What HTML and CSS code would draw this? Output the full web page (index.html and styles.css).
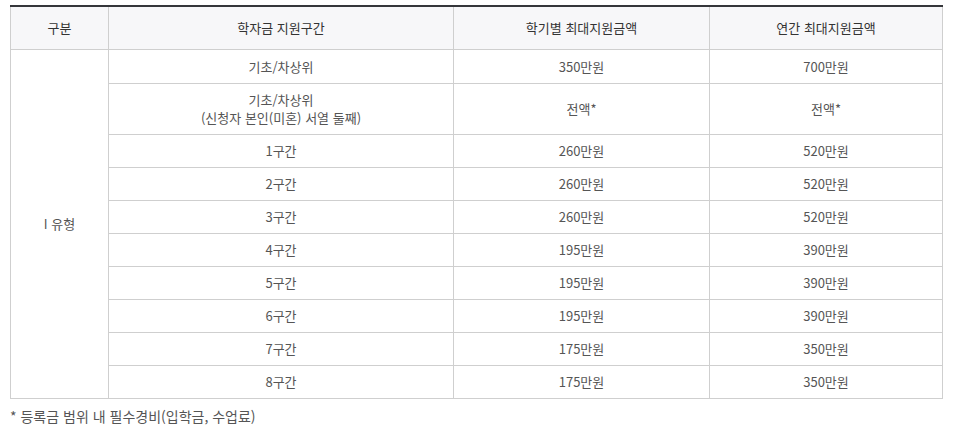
FILE: index.html
```html
<!DOCTYPE html>
<html lang="ko">
<head>
<meta charset="utf-8">
<link rel="stylesheet" href="styles.css">
</head>
<body>
<div class="wrap">
<table class="tbl">
  <colgroup>
    <col class="c1"><col class="c2"><col class="c3"><col class="c4">
  </colgroup>
  <thead>
    <tr><th>구분</th><th>학자금 지원구간</th><th>학기별 최대지원금액</th><th>연간 최대지원금액</th></tr>
  </thead>
  <tbody>
    <tr class="first"><td rowspan="10" class="type">I 유형</td><td>기초/차상위</td><td>350만원</td><td>700만원</td></tr>
    <tr class="tall"><td>기초/차상위<br>(신청자 본인(미혼) 서열 둘째)</td><td>전액*</td><td>전액*</td></tr>
    <tr><td>1구간</td><td>260만원</td><td>520만원</td></tr>
    <tr><td>2구간</td><td>260만원</td><td>520만원</td></tr>
    <tr><td>3구간</td><td>260만원</td><td>520만원</td></tr>
    <tr><td>4구간</td><td>195만원</td><td>390만원</td></tr>
    <tr><td>5구간</td><td>195만원</td><td>390만원</td></tr>
    <tr><td>6구간</td><td>195만원</td><td>390만원</td></tr>
    <tr><td>7구간</td><td>175만원</td><td>350만원</td></tr>
    <tr><td>8구간</td><td>175만원</td><td>350만원</td></tr>
  </tbody>
</table>
<p class="note">* 등록금 범위 내 필수경비(입학금, 수업료)</p>
</div>
</body>
</html>
```
FILE: styles.css
```css
html, body { margin: 0; padding: 0; background: #fff; }
body {
  font-family: "Noto Sans CJK KR", "Noto Sans", sans-serif;
  font-size: 13px;
  color: #555;
}
.wrap { padding: 5px 15px 0 10px; }
.tbl {
  width: 932px;
  border-collapse: collapse;
  table-layout: fixed;
  border-top: 2px solid #35363a;
}
.c1 { width: 98px; }
.c2 { width: 345px; }
.c3 { width: 256px; }
.c4 { width: 233px; }
.tbl th, .tbl td {
  border: 1px solid #cfcfcf;
  text-align: center;
  vertical-align: middle;
  padding: 0;
  line-height: 18px;
}
.tbl thead th {
  border-top: 0;
  background: #f7f7f9;
  color: #333;
  font-weight: normal;
  height: 42px;
}
.tbl tbody td { height: 32px; }
.tbl tbody tr.first td { height: 33px; }
.tbl tbody tr.tall td { height: 50px; }
.type { color: #555; }
.note {
  margin: 7px 0 0;
  font-size: 14px;
  line-height: 20px;
  color: #555;
}
```
